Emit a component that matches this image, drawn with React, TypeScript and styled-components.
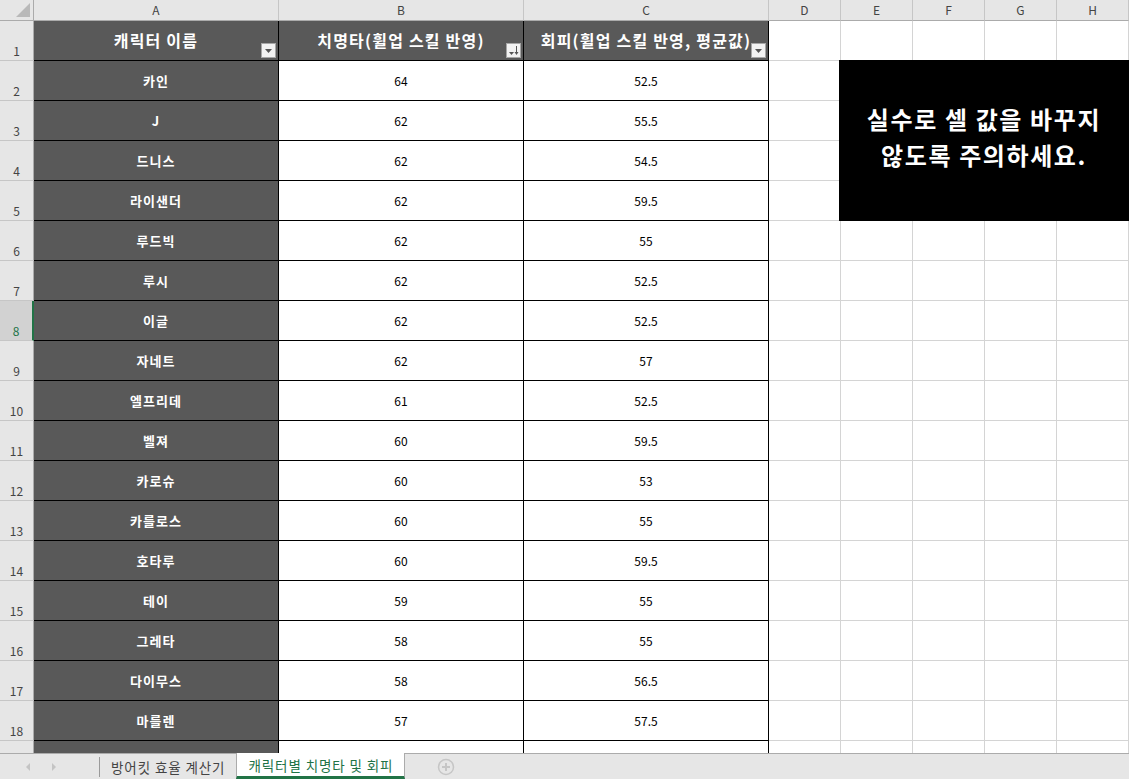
import styled, { createGlobalStyle } from "styled-components";

const GlobalStyle = createGlobalStyle`
  html, body {
    margin: 0;
    padding: 0;
    background: #fff;
    font-family: "Noto Sans CJK KR", "Noto Sans", sans-serif;
  }
`;

type RowType = { name: string; crit: string; evade: string };

const rows: RowType[] = [
  { name: "카인", crit: "64", evade: "52.5" },
  { name: "J", crit: "62", evade: "55.5" },
  { name: "드니스", crit: "62", evade: "54.5" },
  { name: "라이샌더", crit: "62", evade: "59.5" },
  { name: "루드빅", crit: "62", evade: "55" },
  { name: "루시", crit: "62", evade: "52.5" },
  { name: "이글", crit: "62", evade: "52.5" },
  { name: "자네트", crit: "62", evade: "57" },
  { name: "엘프리데", crit: "61", evade: "52.5" },
  { name: "벨져", crit: "60", evade: "59.5" },
  { name: "카로슈", crit: "60", evade: "53" },
  { name: "카를로스", crit: "60", evade: "55" },
  { name: "호타루", crit: "60", evade: "59.5" },
  { name: "테이", crit: "59", evade: "55" },
  { name: "그레타", crit: "58", evade: "55" },
  { name: "다이무스", crit: "58", evade: "56.5" },
  { name: "마를렌", crit: "57", evade: "57.5" },
  { name: "", crit: "", evade: "" },
];

const letters = ["A", "B", "C", "D", "E", "F", "G", "H"];
const SELECTED_ROW = 8;
const LAST_VISIBLE_ROW = 18;

const FilterButton = ({ sorted }: { sorted?: boolean }) => (
  <Filter>
    {sorted ? (
      <svg width="11" height="11" viewBox="0 0 11 11">
        <path d="M1 7 h5 l-2.5 3 z" fill="#555" />
        <rect x="8" y="1" width="1" height="8" fill="#555" />
        <path d="M6.5 7 h4 l-2 3 z" fill="#555" />
      </svg>
    ) : (
      <svg width="11" height="11" viewBox="0 0 11 11">
        <path d="M2 4 h7 l-3.5 4 z" fill="#555" />
      </svg>
    )}
  </Filter>
);

export default function App() {
  return (
    <Window>
      <GlobalStyle />
      <Sheet>
        <Grid>
          <Corner>
            <CornerMark />
          </Corner>
          {letters.map((l) => (
            <ColHead key={l}>{l}</ColHead>
          ))}

          <RowHead>1</RowHead>
          <Cell $kind="head">
            캐릭터 이름
            <FilterButton />
          </Cell>
          <Cell $kind="head">
            치명타(휠업 스킬 반영)
            <FilterButton sorted />
          </Cell>
          <Cell $kind="head">
            회피(휠업 스킬 반영, 평균값)
            <FilterButton />
          </Cell>
          {[0, 1, 2, 3, 4].map((i) => (
            <Cell key={i} $kind="plain" />
          ))}

          {rows.map((r, i) => {
            const n = i + 2;
            return [
              <RowHead key={`h${n}`} $selected={n === SELECTED_ROW}>
                {n <= LAST_VISIBLE_ROW ? n : ""}
              </RowHead>,
              <Cell key={`a${n}`} $kind="name">
                {r.name}
              </Cell>,
              <Cell key={`b${n}`} $kind="value">
                {r.crit}
              </Cell>,
              <Cell key={`c${n}`} $kind="value">
                {r.evade}
              </Cell>,
              ...[0, 1, 2, 3, 4].map((k) => <Cell key={`p${n}-${k}`} $kind="plain" />),
            ];
          })}
        </Grid>
        <Notice>
          실수로 셀 값을 바꾸지
          <br />
          않도록 주의하세요.
        </Notice>
      </Sheet>

      <TabBar>
        <TabNav>
          <NavArrow $dir="left" />
          <NavArrow $dir="right" />
        </TabNav>
        <Tab>방어킷 효율 계산기</Tab>
        <Tab $active>캐릭터별 치명타 및 회피</Tab>
        <AddSheet>
          <svg width="18" height="18" viewBox="0 0 18 18">
            <circle cx="9" cy="9" r="7.5" fill="none" stroke="#c6c6c6" strokeWidth="1.5" />
            <path d="M9 5 v8 M5 9 h8" stroke="#c6c6c6" strokeWidth="2" />
          </svg>
        </AddSheet>
      </TabBar>
    </Window>
  );
}

const Window = styled.div`
  width: 1129px;
  height: 779px;
  display: flex;
  flex-direction: column;
  overflow: hidden;
`;

const Sheet = styled.div`
  position: relative;
  flex: 1;
  overflow: hidden;
`;

const Grid = styled.div`
  display: grid;
  grid-template-columns: 34px 245px 245px 245px 72px 72px 72px 72px 72px;
  grid-template-rows: 21px repeat(19, 40px);
`;

const Corner = styled.div`
  position: relative;
  background: #e6e6e6;
  border-right: 1px solid #ababab;
  border-bottom: 1px solid #ababab;
  box-sizing: border-box;
`;

const CornerMark = styled.div`
  position: absolute;
  right: 3px;
  bottom: 3px;
  width: 0;
  height: 0;
  border-left: 14px solid transparent;
  border-bottom: 14px solid #b9b9b9;
`;

const ColHead = styled.div`
  background: #e6e6e6;
  border-right: 1px solid #c6c6c6;
  border-bottom: 1px solid #ababab;
  box-sizing: border-box;
  display: flex;
  align-items: center;
  justify-content: center;
  font-size: 12px;
  line-height: 1;
  color: #444;
`;

const RowHead = styled.div<{ $selected?: boolean }>`
  background: ${(p) => (p.$selected ? "#d2d2d2" : "#e6e6e6")};
  color: ${(p) => (p.$selected ? "#217346" : "#444")};
  border-right: ${(p) => (p.$selected ? "2px solid #217346" : "1px solid #ababab")};
  border-bottom: 1px solid #c6c6c6;
  box-sizing: border-box;
  display: flex;
  align-items: flex-end;
  justify-content: center;
  padding-bottom: 3px;
  font-size: 12px;
  line-height: 1;
`;

type CellKind = "head" | "name" | "value" | "plain";

const Cell = styled.div<{ $kind: CellKind }>`
  position: relative;
  box-sizing: border-box;
  display: flex;
  align-items: center;
  justify-content: center;
  white-space: nowrap;
  line-height: 1;
  background: ${(p) => (p.$kind === "head" || p.$kind === "name" ? "#595959" : "#fff")};
  color: ${(p) => (p.$kind === "head" || p.$kind === "name" ? "#fff" : "#000")};
  font-size: ${(p) => (p.$kind === "head" ? "16px" : p.$kind === "name" ? "13px" : "12px")};
  font-weight: ${(p) => (p.$kind === "head" || p.$kind === "name" ? 700 : 400)};
  letter-spacing: ${(p) => (p.$kind === "head" ? "1.2px" : p.$kind === "name" ? "1px" : "0")};
  border-right: 1px solid ${(p) => (p.$kind === "plain" ? "#d4d4d4" : "#000")};
  border-bottom: 1px solid ${(p) => (p.$kind === "plain" ? "#d4d4d4" : "#000")};
  padding-bottom: ${(p) => (p.$kind === "head" ? "2px" : "0")};
`;

const Filter = styled.div`
  position: absolute;
  right: 2px;
  bottom: 2px;
  width: 15px;
  height: 15px;
  box-sizing: border-box;
  background: #f2f2f2;
  border: 1px solid #a6a6a6;
  display: flex;
  align-items: center;
  justify-content: center;
`;

const Notice = styled.div`
  position: absolute;
  left: 839px;
  top: 60px;
  width: 290px;
  height: 161px;
  background: #000;
  color: #fff;
  display: flex;
  align-items: center;
  justify-content: center;
  text-align: center;
  font-size: 24px;
  font-weight: 700;
  letter-spacing: 1.6px;
  line-height: 36px;
  padding-bottom: 8px;
  box-sizing: border-box;
`;

const TabBar = styled.div`
  height: 26px;
  flex-shrink: 0;
  background: #e6e6e6;
  border-top: 1px solid #ababab;
  box-sizing: border-box;
  display: flex;
  align-items: stretch;
`;

const TabNav = styled.div`
  width: 100px;
  display: flex;
  align-items: center;
  justify-content: flex-start;
  gap: 22px;
  padding-left: 26px;
  box-sizing: border-box;
  border-right: 1px solid #9a9a9a;
  margin: 3px 0 2px;
`;

const NavArrow = styled.div<{ $dir: "left" | "right" }>`
  width: 0;
  height: 0;
  border-top: 4px solid transparent;
  border-bottom: 4px solid transparent;
  ${(p) =>
    p.$dir === "left" ? "border-right: 4px solid #c4c4c4;" : "border-left: 4px solid #c4c4c4;"}
`;

const Tab = styled.div<{ $active?: boolean }>`
  display: flex;
  align-items: center;
  justify-content: center;
  padding: 0 11px;
  margin-top: ${(p) => (p.$active ? "-1px" : "0")};
  font-size: 13.5px;
  letter-spacing: 0.9px;
  white-space: nowrap;
  color: ${(p) => (p.$active ? "#217346" : "#444")};
  background: ${(p) => (p.$active ? "#fff" : "transparent")};
  border-left: ${(p) => (p.$active ? "1px solid #ababab" : "none")};
  border-right: ${(p) => (p.$active ? "1px solid #ababab" : "none")};
  border-bottom: ${(p) => (p.$active ? "3px solid #217346" : "none")};
  box-sizing: border-box;
`;

const AddSheet = styled.div`
  display: flex;
  align-items: center;
  padding-left: 32px;
`;
